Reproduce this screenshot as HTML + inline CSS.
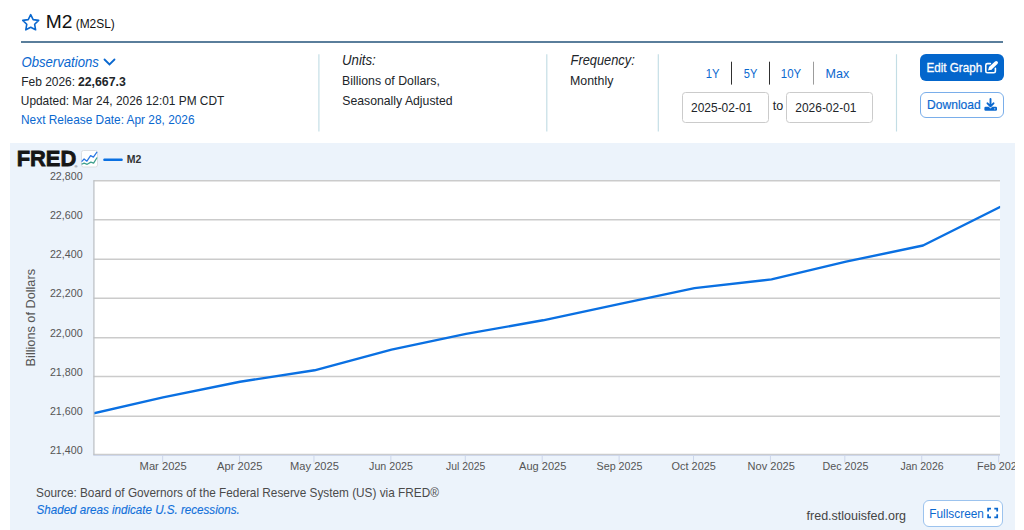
<!DOCTYPE html>
<html lang="en">
<head>
<meta charset="utf-8">
<title>M2 (M2SL) | FRED | St. Louis Fed</title>
<style>
html,body{margin:0;padding:0;background:#fff;}
body{width:1024px;height:530px;position:relative;overflow:hidden;font-family:"Liberation Sans",Arial,sans-serif;color:#212529;}
.t{position:absolute;white-space:nowrap;display:block;margin:0;padding:0;transform-origin:0 50%;}
.t b{font-weight:700;}
.abs{position:absolute;box-sizing:border-box;}
.rule{left:21px;top:41px;width:982px;height:2px;background:#5a7e9b;}
.inp{top:92px;height:31px;border:1px solid #cbcbcb;border-radius:3.5px;background:#fff;}
.btn{border-radius:6px;}
.chart{position:absolute;left:10px;top:143px;display:block;}
.chart text{font-family:"Liberation Sans",Arial,sans-serif;}
.ax{font-size:11px;fill:#555;}
.ay{font-size:12.4px;fill:#555;}
.lg{font-size:11px;font-weight:700;fill:#333;}
.fred{font-size:22.9px;font-weight:700;fill:#161616;stroke:#161616;stroke-width:0.8px;stroke-linejoin:miter;}
.reg{font-size:4px;fill:#333;}
svg.ico{position:absolute;display:block;overflow:visible;}
</style>
</head>
<body>
<header>
  <svg class="ico" style="left:21px;top:13px" width="19" height="18" viewBox="0 0 19 18"><path d="M9.7 1.6l2.45 5.0 5.5 0.8-4 3.9 0.95 5.5-4.9-2.6-4.9 2.6 0.95-5.5-4-3.9 5.5-0.8z" fill="none" stroke="#0a68cf" stroke-width="1.6" stroke-linejoin="round"/></svg>
  <h1 style="margin:0;font-weight:400"><span id="t_m2" class="t" style="left:45px;top:9px;font-size:18px;line-height:27px;transform:translate(0.65px,0.10px) scaleX(1.0660);color:#111">M2</span><span id="t_m2sl" class="t" style="left:75px;top:15px;font-size:12px;line-height:18px;transform:translate(0.70px,0.10px) scaleX(0.9935);color:#111">(M2SL)</span></h1>
  <div class="abs rule"></div>
</header>
<section class="meta">
  <svg class="ico" style="left:0;top:50px" width="1024" height="90" viewBox="0 50 1024 90" aria-hidden="true">
    <g stroke="#c3dde5" stroke-width="1.15"><path d="M318.9 54.2V131.4M546.8 54.2V131.4M658.3 54.2V131.4M896.5 54.2V131.4"/></g>
    <rect x="731" y="61.7" width="1" height="22.9" fill="#303030"/>
    <rect x="769" y="61.7" width="1" height="22.9" fill="#303030"/>
    <rect x="813" y="61.7" width="1" height="22.9" fill="#9c9c9c"/>
  </svg>
  <span id="t_obs" class="t" style="left:21px;top:51px;font-size:14px;line-height:21px;transform:translate(0.40px,0.50px) scaleX(0.9397);color:#0a68cf;font-style:italic">Observations</span>
  <svg class="ico" style="left:102px;top:56px" width="16" height="12" viewBox="102 56 16 12"><path d="M104.5 59.5L109.5 64.4L114.5 59.5" fill="none" stroke="#0a68cf" stroke-width="1.8" stroke-linecap="round" stroke-linejoin="miter"/></svg>
  <span id="t_feb" class="t" style="left:21px;top:71px;font-size:12.8px;line-height:19px;transform:translate(0.15px,0.50px) scaleX(0.9363);color:#212529">Feb 2026:</span><span id="t_val" class="t" style="left:77px;top:71px;font-size:12.8px;line-height:19px;transform:translate(0.95px,0.50px) scaleX(0.9592);color:#212529"><b>22,667.3</b></span>
  <span id="t_upd" class="t" style="left:20px;top:91px;font-size:12.8px;line-height:19px;transform:translate(0.80px,0.00px) scaleX(0.9288);color:#212529">Updated: Mar 24, 2026 12:01 PM CDT</span>
  <span id="t_next" class="t" style="left:21px;top:109px;font-size:12.8px;line-height:19px;transform:translate(0.05px,0.50px) scaleX(0.9272);color:#0a68cf">Next Release Date: Apr 28, 2026</span>
  <span id="t_units" class="t" style="left:342px;top:50px;font-size:14px;line-height:21px;transform:translate(0.05px,0.25px) scaleX(0.9419);color:#212529;font-style:italic">Units:</span>
  <span id="t_bill" class="t" style="left:342px;top:71px;font-size:12.8px;line-height:19px;transform:translate(0.05px,0.25px) scaleX(0.9623);color:#212529">Billions of Dollars,</span>
  <span id="t_seas" class="t" style="left:342px;top:90px;font-size:12.8px;line-height:19px;transform:translate(0.30px,0.75px) scaleX(0.9562);color:#212529">Seasonally Adjusted</span>
  <span id="t_freq" class="t" style="left:570px;top:50px;font-size:14px;line-height:21px;transform:translate(0.55px,0.25px) scaleX(0.9170);color:#212529;font-style:italic">Frequency:</span>
  <span id="t_mon" class="t" style="left:570px;top:70px;font-size:12.8px;line-height:19px;transform:translate(0.05px,0.75px) scaleX(0.9658);color:#212529">Monthly</span>
  <nav>
  <span id="t_1y" class="t" style="left:705px;top:63px;font-size:12.8px;line-height:19px;transform:translate(0.80px,0.75px) scaleX(0.8789);color:#0a68cf">1Y</span>
  <span id="t_5y" class="t" style="left:743px;top:63px;font-size:12.8px;line-height:19px;transform:translate(0.80px,0.75px) scaleX(0.8650);color:#0a68cf">5Y</span>
  <span id="t_10y" class="t" style="left:780px;top:63px;font-size:12.8px;line-height:19px;transform:translate(0.80px,0.75px) scaleX(0.8953);color:#0a68cf">10Y</span>
  <span id="t_max" class="t" style="left:825px;top:63px;font-size:12.8px;line-height:19px;transform:translate(0.55px,0.75px) scaleX(0.9785);color:#0a68cf">Max</span>
  </nav>
  <div class="abs inp" style="left:681.5px;width:87.5px"></div>
  <span id="t_d1" class="t" style="left:691px;top:98px;font-size:12.8px;line-height:19px;transform:translate(0.05px,0.25px) scaleX(0.9341);color:#212529">2025-02-01</span>
  <span id="t_to" class="t" style="left:772px;top:96px;font-size:12.8px;line-height:19px;transform:translate(0.80px,0.25px) scaleX(0.9769);color:#212529">to</span>
  <div class="abs inp" style="left:786px;width:87px"></div>
  <span id="t_d2" class="t" style="left:795px;top:98px;font-size:12.8px;line-height:19px;transform:translate(0.30px,0.25px) scaleX(0.9341);color:#212529">2026-02-01</span>
  <div class="abs btn" style="left:919.75px;top:54.25px;width:84px;height:26.5px;background:#0366cc"></div>
  <span id="t_edit" class="t" style="left:926px;top:58px;font-size:13.2px;line-height:20px;transform:translate(0.55px,0.00px) scaleX(0.8813);color:#fff;-webkit-text-stroke:0.3px #fff">Edit Graph</span>
  <svg class="ico" style="left:983px;top:59px" width="17" height="17" viewBox="983 59 17 17"><path d="M990.4 63.6H987.4A1.6 1.6 0 0 0 985.8 65.2V71.2A1.6 1.6 0 0 0 987.4 72.8H993.8A1.6 1.6 0 0 0 995.4 71.2V68.3" fill="none" stroke="#fff" stroke-width="1.6" stroke-linecap="round"/><path d="M990.7 67.9L996.2 62.8" fill="none" stroke="#fff" stroke-width="3.5" stroke-linecap="round"/><path d="M988 70.5L989.2 66.6L991.8 69.4z" fill="#fff"/></svg>
  <div class="abs btn" style="left:919.75px;top:92px;width:84px;height:25.75px;background:#fff;border:1px solid #7aaeea"></div>
  <span id="t_dl" class="t" style="left:927px;top:95px;font-size:13.2px;line-height:20px;transform:translate(0.05px,0.00px) scaleX(0.9154);color:#0a68cf;-webkit-text-stroke:0.2px #0a68cf">Download</span>
  <svg class="ico" style="left:983px;top:97px" width="16" height="16" viewBox="983 97 16 16"><rect x="984.4" y="106.8" width="12.6" height="4" rx="1.2" fill="#0a68cf"/><path d="M988.6 106.6L990.5 108.6L992.4 106.6z" fill="#fff"/><path d="M990.5 99V106.2M987.5 103.3L990.5 106.4L993.5 103.3" fill="none" stroke="#0a68cf" stroke-width="1.9" stroke-linecap="round" stroke-linejoin="round"/><circle cx="994.8" cy="108.8" r="0.6" fill="#fff"/></svg>
</section>
<main>
<svg class="chart" width="1005" height="387" viewBox="10 143 1005 387">
<rect x="10" y="143" width="1005" height="387" fill="#ecf3fb"/>
<rect x="93.5" y="180.5" width="906.5" height="274.0" fill="#fff"/>
<path d="M93.5 180.8H1000.0" stroke="#cbcbcb" stroke-width="1.45" fill="none"/>
<path d="M93.5 219.8H1000.0" stroke="#cbcbcb" stroke-width="1.45" fill="none"/>
<path d="M93.5 259.3H1000.0" stroke="#cbcbcb" stroke-width="1.45" fill="none"/>
<path d="M93.5 298.3H1000.0" stroke="#cbcbcb" stroke-width="1.45" fill="none"/>
<path d="M93.5 337.7H1000.0" stroke="#cbcbcb" stroke-width="1.45" fill="none"/>
<path d="M93.5 376.5H1000.0" stroke="#cbcbcb" stroke-width="1.45" fill="none"/>
<path d="M93.5 416.25H1000.0" stroke="#cbcbcb" stroke-width="1.45" fill="none"/>
<path d="M93.5 454.55H1000.0" stroke="#cbcbcb" stroke-width="1.45" fill="none"/>
<path d="M93.9 180.3V455.3" stroke="#bcc0c6" stroke-width="1.3" fill="none"/>
<path d="M93.5 455.45H1000.0" stroke="#ccd6eb" stroke-width="1" fill="none"/>
<path d="M162.65 455V462.5" stroke="#ccd6eb" stroke-width="1" fill="none"/>
<path d="M239.55 455V462.5" stroke="#ccd6eb" stroke-width="1" fill="none"/>
<path d="M313.97 455V462.5" stroke="#ccd6eb" stroke-width="1" fill="none"/>
<path d="M390.87 455V462.5" stroke="#ccd6eb" stroke-width="1" fill="none"/>
<path d="M465.30 455V462.5" stroke="#ccd6eb" stroke-width="1" fill="none"/>
<path d="M542.20 455V462.5" stroke="#ccd6eb" stroke-width="1" fill="none"/>
<path d="M619.10 455V462.5" stroke="#ccd6eb" stroke-width="1" fill="none"/>
<path d="M693.52 455V462.5" stroke="#ccd6eb" stroke-width="1" fill="none"/>
<path d="M770.42 455V462.5" stroke="#ccd6eb" stroke-width="1" fill="none"/>
<path d="M844.84 455V462.5" stroke="#ccd6eb" stroke-width="1" fill="none"/>
<path d="M921.74 455V462.5" stroke="#ccd6eb" stroke-width="1" fill="none"/>
<path d="M998.65 455V462.5" stroke="#ccd6eb" stroke-width="1" fill="none"/>
<clipPath id="plotclip"><rect x="94.4" y="180.5" width="905.7" height="274.0"/></clipPath>
<polyline clip-path="url(#plotclip)" points="93.50,413.40 163.04,397.40 240.03,381.80 314.54,370.30 391.53,349.60 466.04,333.90 543.03,320.30 620.02,303.80 694.53,288.10 771.52,279.40 846.03,261.70 923.02,245.50 1000.01,207.00" fill="none" stroke="#0a70e2" stroke-width="2.4" stroke-linejoin="round" stroke-linecap="round"/>
<text x="49.9" y="179.9" class="ax" textLength="32.7" lengthAdjust="spacingAndGlyphs">22,800</text>
<text x="49.9" y="218.9" class="ax" textLength="32.7" lengthAdjust="spacingAndGlyphs">22,600</text>
<text x="49.9" y="258.4" class="ax" textLength="32.7" lengthAdjust="spacingAndGlyphs">22,400</text>
<text x="49.9" y="297.4" class="ax" textLength="32.7" lengthAdjust="spacingAndGlyphs">22,200</text>
<text x="49.9" y="336.8" class="ax" textLength="32.7" lengthAdjust="spacingAndGlyphs">22,000</text>
<text x="49.9" y="375.6" class="ax" textLength="32.7" lengthAdjust="spacingAndGlyphs">21,800</text>
<text x="49.9" y="415.4" class="ax" textLength="32.7" lengthAdjust="spacingAndGlyphs">21,600</text>
<text x="49.9" y="453.7" class="ax" textLength="32.7" lengthAdjust="spacingAndGlyphs">21,400</text>
<text x="139.6" y="470" class="ax" textLength="47.2" lengthAdjust="spacingAndGlyphs">Mar 2025</text>
<text x="217.1" y="470" class="ax" textLength="45.3" lengthAdjust="spacingAndGlyphs">Apr 2025</text>
<text x="290.1" y="470" class="ax" textLength="48.8" lengthAdjust="spacingAndGlyphs">May 2025</text>
<text x="369.1" y="470" class="ax" textLength="43.8" lengthAdjust="spacingAndGlyphs">Jun 2025</text>
<text x="446.1" y="470" class="ax" textLength="39.3" lengthAdjust="spacingAndGlyphs">Jul 2025</text>
<text x="519.1" y="470" class="ax" textLength="47.3" lengthAdjust="spacingAndGlyphs">Aug 2025</text>
<text x="596.6" y="470" class="ax" textLength="45.8" lengthAdjust="spacingAndGlyphs">Sep 2025</text>
<text x="671.6" y="470" class="ax" textLength="44.3" lengthAdjust="spacingAndGlyphs">Oct 2025</text>
<text x="747.6" y="470" class="ax" textLength="47.3" lengthAdjust="spacingAndGlyphs">Nov 2025</text>
<text x="822.6" y="470" class="ax" textLength="45.8" lengthAdjust="spacingAndGlyphs">Dec 2025</text>
<text x="900.4" y="470" class="ax" textLength="43.2" lengthAdjust="spacingAndGlyphs">Jan 2026</text>
<text x="977.1" y="470" class="ax" textLength="45.8" lengthAdjust="spacingAndGlyphs">Feb 2026</text>
<text transform="translate(35 366.4) rotate(-90)" class="ay" textLength="97.4" lengthAdjust="spacingAndGlyphs">Billions of Dollars</text>
<rect x="103.4" y="158.4" width="19.2" height="2.7" rx="0.9" fill="#0a70e2"/>
<text x="126.7" y="162.7" class="lg" textLength="14.6" lengthAdjust="spacingAndGlyphs">M2</text>
<text x="16.7" y="166.35" class="fred" textLength="59.6" lengthAdjust="spacingAndGlyphs">FRED</text>
<text x="74.6" y="167.7" class="reg">®</text>
<rect x="81.5" y="150.5" width="16" height="16.5" rx="2" fill="#fff" stroke="#dcdfe3" stroke-width="1"/>
<path d="M81.6 161.6L84.1 159L86.9 161.2L90.6 155.6L93.4 157.1L97.1 151.9" fill="none" stroke="#2a78e4" stroke-width="1.25" stroke-linejoin="round"/>
<path d="M81.6 164.3L84.1 163.1L87.2 164.3L90.9 162.1L93.6 163.1L97.1 157.5" fill="none" stroke="#3fa08e" stroke-width="1.25" stroke-linejoin="round"/>
</svg>
  <span id="t_src" class="t" style="left:36px;top:483px;font-size:12.8px;line-height:19px;transform:translate(0.05px,0.00px) scaleX(0.9221);color:#4a4a4a">Source: Board of Governors of the Federal Reserve System (US) via FRED®</span>
  <span id="t_shade" class="t" style="left:36px;top:499px;font-size:12.8px;line-height:19px;transform:translate(0.55px,0.75px) scaleX(0.9065);color:#1270da;font-style:italic;-webkit-text-stroke:0.15px #1270da">Shaded areas indicate U.S. recessions.</span>
  <span id="t_site" class="t" style="left:806px;top:506px;font-size:12.8px;line-height:19px;transform:translate(0.55px,0.00px) scaleX(0.9777);color:#444">fred.stlouisfed.org</span>
  <div class="abs btn" style="left:923.25px;top:499.9px;width:80px;height:27px;background:#fff;border:1px solid #9cc3ee"></div>
  <span id="t_full" class="t" style="left:929px;top:503px;font-size:12.8px;line-height:19px;transform:translate(0.30px,0.50px) scaleX(0.9243);color:#0a68cf">Fullscreen</span>
  <svg class="ico" style="left:986px;top:506px" width="14" height="14" viewBox="986 506 14 14"><path d="M988.1 511.6V508.6H991M994.3 508.6H997.2V511.6M997.2 514.3V517.3H994.3M991 517.3H988.1V514.3" fill="none" stroke="#0a68cf" stroke-width="1.75" stroke-linejoin="miter"/></svg>
</main>
</body>
</html>
